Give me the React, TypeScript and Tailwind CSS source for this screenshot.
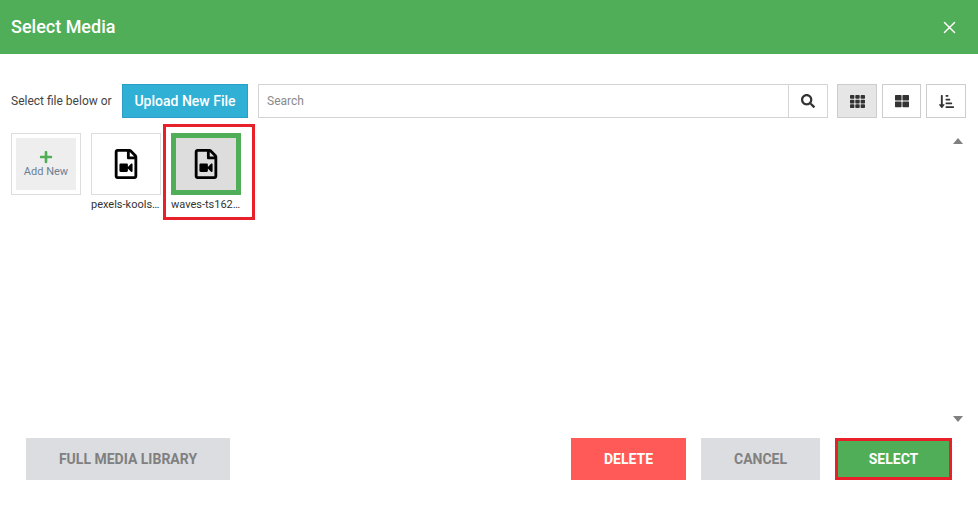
import { FaPlus, FaRegFileVideo, FaSearch, FaSortAmountDownAlt, FaTh, FaThLarge } from 'react-icons/fa'
import { IoCloseOutline } from 'react-icons/io5'

const footerButton = 'h-[42px] flex items-center justify-center text-sm font-bold uppercase'
const viewButton = 'h-[34px] flex items-center justify-center border border-[#cccccc] text-[#333333]'

function MediaThumb(props: { name: string; selected?: boolean }) {
  return (
    <div className="relative w-[70px]">
      <div
        className={
          props.selected
            ? 'h-[62px] flex items-center justify-center border-[5px] border-[#4fae57] bg-[#dddddd]'
            : 'h-[62px] flex items-center justify-center border border-[#dddddd] bg-white'
        }
      >
        <FaRegFileVideo className="text-[30px] text-black" />
      </div>
      <div className="mt-[2px] w-[70px] truncate text-[11px] leading-[15px] text-[#333333]">{props.name}</div>
      {/* Red annotation frame round the chosen file */}
      {props.selected && (
        <div className="absolute left-[-8px] top-[-9px] h-[96px] w-[92px] border-[3px] border-[#e8202a]"></div>
      )}
    </div>
  )
}

export default function App() {
  return (
    <div className="h-[516px] w-[978px] bg-white font-['Roboto',sans-serif] flex flex-col">
      {/* Header */}
      <div className="h-[54px] flex items-center justify-between bg-[#4fae57] pl-[11px] pr-[17px] text-white">
        <div className="text-lg font-medium">Select Media</div>
        <IoCloseOutline className="text-[23px]" />
      </div>

      {/* Toolbar */}
      <div className="mt-[30px] flex h-[34px] items-center pl-[11px]">
        <div className="w-[111px] text-xs text-[#444444]">Select file below or</div>
        <div className="h-[34px] w-[126px] flex items-center justify-center border border-[#2a9fc7] bg-[#31b0d5] text-sm font-medium text-white">
          Upload New File
        </div>
        <div className="ml-[10px] flex h-[34px] w-[570px] border border-[#d4d4d4]">
          <div className="flex-1 flex items-center pl-2 text-xs text-[#8a8a8a]">Search</div>
          <div className="w-[39px] flex items-center justify-center border-l border-[#d4d4d4] text-[#333333]">
            <FaSearch className="text-sm" />
          </div>
        </div>
        <div className={`ml-[9px] w-10 bg-[#e6e6e6] border-[#adadad] ${viewButton}`}>
          <FaTh className="text-[15px]" />
        </div>
        <div className={`ml-[5px] w-[39px] ${viewButton}`}>
          <FaThLarge className="text-sm" />
        </div>
        <div className={`ml-[5px] w-10 ${viewButton}`}>
          <FaSortAmountDownAlt className="text-[15px]" />
        </div>
      </div>

      {/* File list */}
      <div className="relative mt-[15px] flex flex-1 gap-[10px] pl-[11px]">
        <div className="h-[62px] w-[70px] border border-[#dddddd] bg-white p-1">
          <div className="flex h-full flex-col items-center justify-center bg-[#eeeeee]">
            <FaPlus className="text-sm text-[#4fae57]" />
            <div className="mt-[1px] text-[11px] leading-[14px] text-[#6c7f92]">Add New</div>
          </div>
        </div>
        <MediaThumb name="pexels-koolshooters.mp4" />
        <MediaThumb name="waves-ts16200000.mp4" selected />

        {/* Scrollbar arrows */}
        <div className="absolute right-[15px] top-[5px] bottom-[16px] flex w-[10px] flex-col justify-between">
          <div className="h-0 w-0 border-x-[5px] border-b-[6px] border-x-transparent border-b-[#808080]"></div>
          <div className="h-0 w-0 border-x-[5px] border-t-[6px] border-x-transparent border-t-[#808080]"></div>
        </div>
      </div>

      {/* Footer */}
      <div className="mb-[36px] flex pl-[26px]">
        <div className={`w-[204px] bg-[#dcdde0] text-[#808080] ${footerButton}`}>Full Media Library</div>
        <div className={`ml-[341px] w-[115px] bg-[#ff5a57] text-white ${footerButton}`}>Delete</div>
        <div className={`ml-[15px] w-[119px] bg-[#dcdde0] text-[#808080] ${footerButton}`}>Cancel</div>
        <div className={`ml-[15px] w-[117px] border-[3px] border-[#e8202a] bg-[#4fae57] text-white ${footerButton}`}>
          Select
        </div>
      </div>
    </div>
  )
}
